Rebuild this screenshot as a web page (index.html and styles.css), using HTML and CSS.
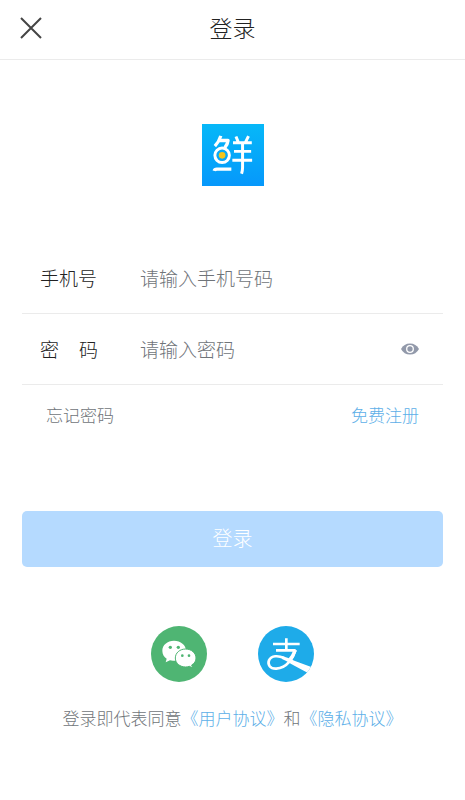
FILE: index.html
```html
<!DOCTYPE html>
<html lang="zh-CN">
<head>
<meta charset="utf-8">
<meta name="viewport" content="width=device-width, initial-scale=1">
<title>登录</title>
<link rel="stylesheet" href="styles.css">
</head>
<body>
<header class="header">
  <button class="close" type="button" aria-label="关闭">
    <svg width="22" height="22" viewBox="0 0 22 22"><path d="M1 1 21 21M21 1 1 21" fill="none" stroke="#444" stroke-width="2"/></svg>
  </button>
  <h1 class="title">登录</h1>
</header>
<main class="main">
  <svg class="logo" viewBox="0 0 188 188" role="img" aria-label="鲜">
    <defs><linearGradient id="sky" x1="0" y1="0" x2="0" y2="1"><stop offset="0" stop-color="#06b8f8"/><stop offset="1" stop-color="#0698fb"/></linearGradient></defs>
    <rect width="188" height="188" fill="url(#sky)"/>
    <g fill="none" stroke="#fff" stroke-width="10" stroke-linejoin="round">
      <path d="M57 36Q52 53 39 67M50 50H79Q78 61 69 72"/>
      <circle cx="61" cy="95" r="22" stroke-width="9"/>
      <path d="M37 142Q38 137 45 137H89"/>
      <path d="M103 38 110 55M141 37 132 55M94 57H151M97 83H149M92 110H152M123 57V132Q123 141 120 151" stroke-width="9"/>
    </g>
    <circle cx="61" cy="95" r="10" fill="#f5c51c"/>
  </svg>
  <form class="form">
    <div class="field">
      <label class="label" for="phone">手机号</label>
      <input class="input" id="phone" type="tel" placeholder="请输入手机号码">
    </div>
    <div class="field">
      <label class="label spread" for="password"><span>密</span><span>码</span></label>
      <input class="input" id="password" type="password" placeholder="请输入密码">
      <button class="eye" type="button" aria-label="显示密码">
        <svg width="18" height="12" viewBox="0 0 18 12"><path d="M0 6Q3 .5 9 .5T18 6Q15 11.500 9 11.500T0 6Z" fill="#9299aa"/><circle cx="9" cy="6" r="3.300" fill="#9299aa" stroke="#fff" stroke-width="1.300"/></svg>
      </button>
    </div>
    <div class="links">
      <a class="forgot" href="#forgot">忘记密码</a>
      <a class="link" href="#register">免费注册</a>
    </div>
    <button class="submit" type="submit">登录</button>
  </form>
  <div class="social">
    <button class="round" type="button" aria-label="微信登录">
      <svg viewBox="0 0 168 168">
        <circle cx="84" cy="84" r="84" fill="#4fb573"/>
        <path d="M69 44C49 44 34 57 34 74C34 85 39 93 47 98L44 109 57 103Q63 105 71 104C91 104 105 91 105 74C105 57 89 44 69 44Z" fill="#fff"/>
        <path d="M104 69C86 69 73 81 73 96C73 112 87 123 104 123Q110 123 115 121L125 126 122 117C131 112 135 105 135 96C135 81 121 69 104 69Z" fill="#fff" stroke="#4fb573" stroke-width="3"/>
        <g fill="#4fb573"><circle cx="58" cy="64" r="5"/><circle cx="82" cy="64" r="5"/><circle cx="94" cy="89" r="4"/><circle cx="114" cy="89" r="4"/></g>
      </svg>
    </button>
    <button class="round" type="button" aria-label="支付宝登录">
      <svg viewBox="0 0 168 168">
        <defs><clipPath id="disc"><circle cx="84" cy="84" r="84"/></clipPath></defs>
        <g clip-path="url(#disc)">
          <rect width="168" height="168" fill="#1eabe9"/>
          <path d="M85 37V73M45 54H125M54 73H113" fill="none" stroke="#fff" stroke-width="8"/>
          <path d="M112 73C106 94 88 126 55 128C36 129 28 116 33 103C40 88 61 88 78 96" fill="none" stroke="#fff" stroke-width="8"/>
          <path d="M72 90Q91 95 109 104L174 128 160 146Q128 130 101 115Q85 104 72 99Z" fill="#fff"/>
          <path d="M106 73H117Q110 92 99 109L89 101Q101 88 106 73Z" fill="#fff"/>
        </g>
      </svg>
    </button>
  </div>
  <p class="agreement">登录即代表同意<a class="link" href="#terms">《用户协议》</a>和<a class="link" href="#privacy">《隐私协议》</a></p>
</main>
</body>
</html>
```
FILE: styles.css
```css
* {
  box-sizing: border-box;
}

body {
  margin: 0;
  background: #fff;
  color: #222;
  font-family: "Noto Sans CJK SC", sans-serif;
  font-weight: 300;
}

button {
  padding: 0;
  border: 0;
  background: none;
  font: inherit;
  cursor: pointer;
}

svg {
  display: block;
}

a {
  text-decoration: none;
}

.header {
  display: grid;
  grid-template-columns: 1fr auto 1fr;
  align-items: center;
  height: 60px;
  padding: 0 20px 4px;
  border-bottom: 1px solid #ebebeb;
}

.close {
  justify-self: start;
}

.title {
  margin: 0;
  padding-bottom: 2px;
  font-size: 23px;
  font-weight: 300;
  line-height: 32px;
}

.main {
  display: flex;
  flex-direction: column;
  align-items: center;
  padding: 64px 22px 32px;
}

.logo {
  width: 62px;
  height: 62px;
}

.form {
  width: 100%;
  margin-top: 57px;
}

.field {
  display: flex;
  align-items: center;
  height: 71px;
  padding: 0 24px 0 18px;
  border-bottom: 1px solid #ebebeb;
  font-size: 19px;
}

.label {
  flex: none;
  width: 58px;
  margin-right: 42px;
  padding-bottom: 2px;
}

.spread {
  display: flex;
  justify-content: space-between;
}

.input {
  flex: 1;
  min-width: 0;
  padding: 0 0 2px;
  border: 0;
  outline: 0;
  background: none;
  color: #222;
  font: inherit;
}

.input::placeholder {
  color: #6f7479;
}

.links {
  display: flex;
  justify-content: space-between;
  padding: 18px 24px 0;
  font-size: 17px;
  line-height: 24px;
}

.forgot {
  color: #6f7479;
}

.link {
  color: #5dafe8;
}

.submit {
  display: block;
  width: 100%;
  height: 56px;
  margin-top: 84px;
  padding-bottom: 4px;
  border-radius: 5px;
  background: #b5daff;
  color: #fff;
  font-size: 20px;
}

.social {
  display: flex;
  gap: 51px;
  margin-top: 59px;
}

.round {
  width: 56px;
  height: 56px;
}

.agreement {
  margin: 24px 0 0;
  color: #6f7479;
  font-size: 17px;
  line-height: 24px;
  white-space: nowrap;
}
```
